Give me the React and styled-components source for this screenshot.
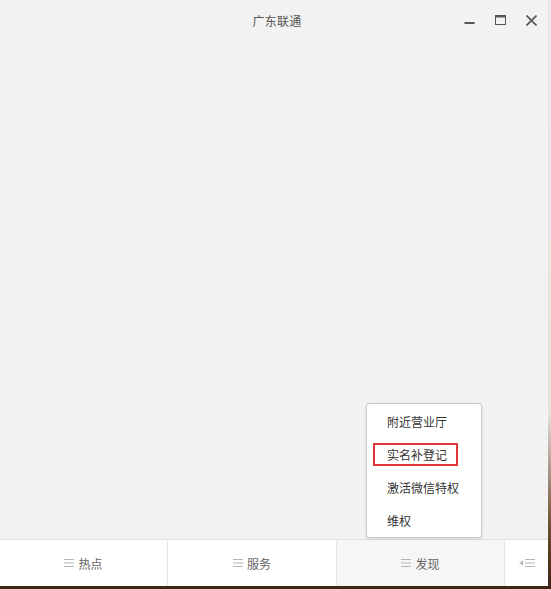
import React from 'react';
import styled, { createGlobalStyle } from 'styled-components';

const GlobalStyle = createGlobalStyle`
  html, body {
    margin: 0;
    padding: 0;
  }
  body {
    width: 551px;
    height: 589px;
    overflow: hidden;
    font-family: "Noto Sans CJK SC", "Liberation Sans", sans-serif;
    background:
      linear-gradient(90deg, #b52a22 0px, #e8d9d0 20px, #2a1a10 28px, #2a1a10 60px, #ddd 62px, #c9c0bc 80px, #c33a26 85px, #3a2514 100px, #3a2514 550px),
      #3a2514;
    background-size: 100% 3px, auto;
    background-position: 0 586px, 0 0;
    background-repeat: no-repeat;
  }
`;

const Frame = styled.div`
  display: flex;
  height: 589px;
  background: linear-gradient(180deg, #eaeaea 0%, #e6e2de 70%, #6b4a2e 90%, #3a2514 100%);
`;

const Window = styled.div`
  width: 548px;
  height: 586px;
  display: flex;
  flex-direction: column;
  background: #f2f2f2;
`;

const TitleBar = styled.div`
  display: grid;
  grid-template-columns: 1fr auto 1fr;
  align-items: center;
  height: 40px;
  flex-shrink: 0;
`;

const Title = styled.div`
  font-size: 12px;
  color: #555;
  letter-spacing: 0.2px;
  padding-left: 6px;
`;

const Controls = styled.div`
  display: flex;
  justify-content: flex-end;
  align-items: center;
  padding-right: 1px;
`;

const CtrlButton = styled.div`
  width: 31px;
  height: 24px;
  display: flex;
  align-items: center;
  justify-content: center;
  color: #555;
`;

const Content = styled.div`
  flex: 1;
  position: relative;
`;

const Menu = styled.div`
  position: absolute;
  right: 66px;
  bottom: 1px;
  width: 114px;
  padding: 1px 0 0;
  background: #fff;
  border: 1px solid #c8c8c8;
  border-radius: 3px;
  box-shadow: 0 1px 3px rgba(0, 0, 0, 0.12);
`;

const MenuItem = styled.div`
  height: 33px;
  display: flex;
  align-items: center;
  padding-left: ${(p) => (p.$marked ? '6px' : '20px')};
  font-size: 12px;
  color: #333;
`;

const Marked = styled.span`
  display: inline-flex;
  align-items: center;
  height: 19px;
  padding: 0 9px 0 12px;
  border: 2px solid #e0353b;
`;

const TabBar = styled.div`
  display: grid;
  grid-template-columns: 168px 169px 168px 1fr;
  height: 46px;
  flex-shrink: 0;
  border-top: 1px solid #e2e2e2;
  background: #fff;
`;

const Tab = styled.div`
  display: flex;
  align-items: center;
  justify-content: center;
  gap: 4px;
  font-size: 12px;
  color: #666;
  background: ${(p) => (p.$active ? '#f6f6f6' : '#fff')};
  border-right: ${(p) => (p.$last ? 'none' : '1px solid #e6e6e6')};
`;

const Lines = ({ color = '#b5b5b5' }) => (
  <svg width="10" height="8" viewBox="0 0 10 8">
    <path d="M0 0.5H10M0 4H10M0 7.5H10" stroke={color} strokeWidth="1" />
  </svg>
);

const Collapse = () => (
  <svg width="16" height="8" viewBox="0 0 16 8">
    <path d="M0 4L4 1.5V6.5Z" fill="#b5b5b5" />
    <path d="M6 0.5H16M6 4H16M6 7.5H16" stroke="#b5b5b5" strokeWidth="1" />
  </svg>
);

export default function App() {
  return (
    <>
      <GlobalStyle />
      <Frame>
        <Window>
          <TitleBar>
            <div />
            <Title>广东联通</Title>
            <Controls>
              <CtrlButton>
                <svg width="11" height="11" viewBox="0 0 11 11">
                  <path d="M0.5 8H10.5" stroke="#555" strokeWidth="2" />
                </svg>
              </CtrlButton>
              <CtrlButton>
                <svg width="11" height="11" viewBox="0 0 11 11">
                  <rect x="0.5" y="0.5" width="10" height="9" fill="none" stroke="#555" strokeWidth="1" />
                  <path d="M0 1.5H11" stroke="#555" strokeWidth="2" />
                </svg>
              </CtrlButton>
              <CtrlButton>
                <svg width="11" height="11" viewBox="0 0 11 11">
                  <path d="M0.5 0.5L10.5 10.5M10.5 0.5L0.5 10.5" stroke="#555" strokeWidth="1.6" />
                </svg>
              </CtrlButton>
            </Controls>
          </TitleBar>
          <Content>
            <Menu>
              <MenuItem>附近营业厅</MenuItem>
              <MenuItem $marked>
                <Marked>实名补登记</Marked>
              </MenuItem>
              <MenuItem>激活微信特权</MenuItem>
              <MenuItem>维权</MenuItem>
            </Menu>
          </Content>
          <TabBar>
            <Tab><Lines />热点</Tab>
            <Tab><Lines />服务</Tab>
            <Tab $active><Lines />发现</Tab>
            <Tab $last><Collapse /></Tab>
          </TabBar>
        </Window>
      </Frame>
    </>
  );
}
